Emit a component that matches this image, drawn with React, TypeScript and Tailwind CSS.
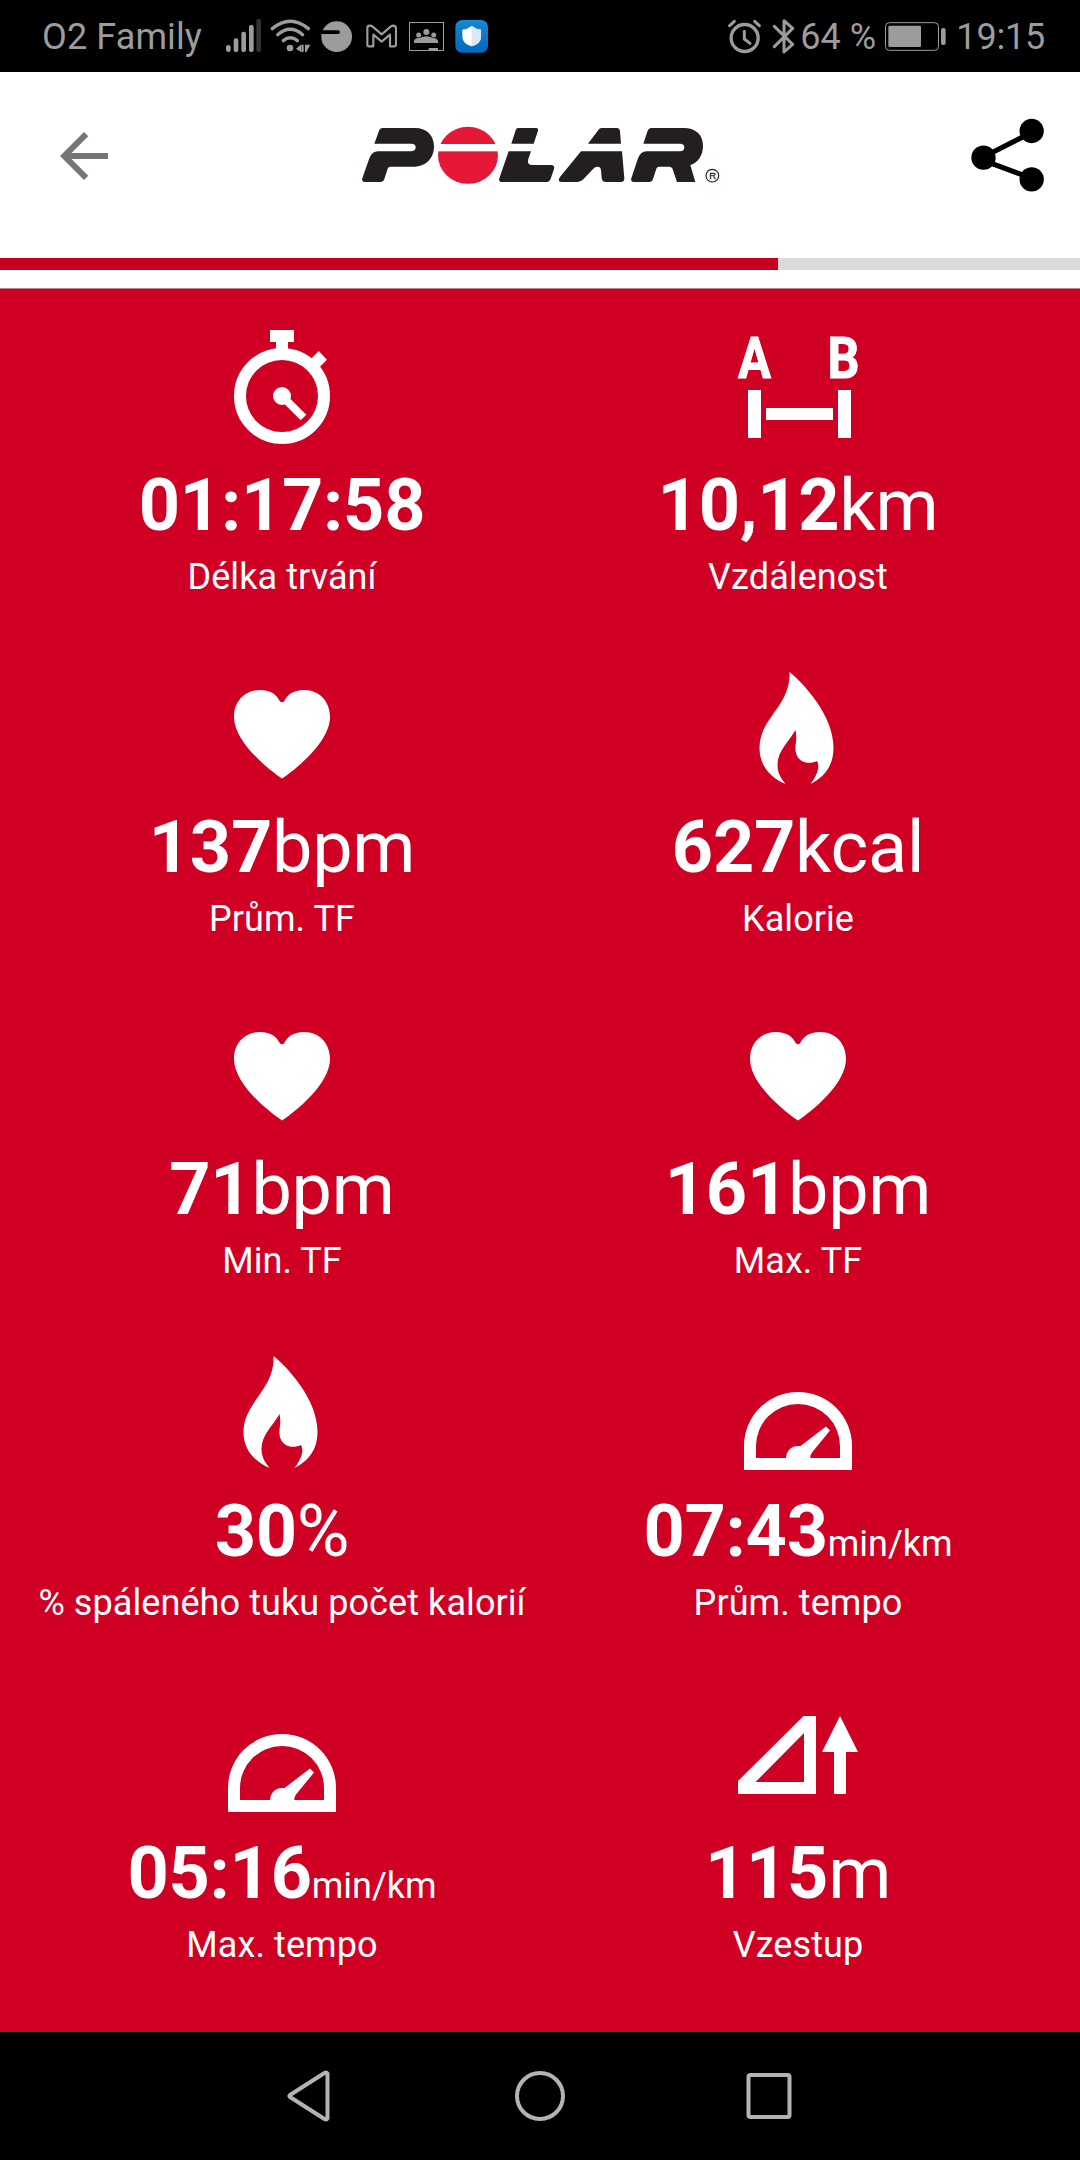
import type { ReactNode } from "react";

function StatusIcon({ x, w, className, children }: { x: number; w: number; className: string; children: ReactNode }) {
  return (
    <svg viewBox={`${x} 54 ${w} 108`} width={w / 3} height={36} className={`shrink-0 ${className}`} fill="#9c9c9c">
      {children}
    </svg>
  );
}

function StatusBar() {
  return (
    <div className="flex h-[72px] items-center bg-black pl-[42px] pr-[35px] text-[36px] leading-[42px] text-[#9c9c9c]">
      <span className="w-[184px] whitespace-nowrap pt-0.5 tracking-[0.12px]">O2 Family</span>
      <StatusIcon x={678} w={108} className="">
        <rect x="678" y="135" width="14" height="21" rx="7" />
        <rect x="701" y="115" width="14" height="41" rx="6" />
        <rect x="724" y="95" width="14" height="61" rx="6" />
        <rect x="747" y="75" width="14" height="81" rx="6" />
        <rect x="769" y="57" width="14" height="99" rx="6" fill="#333" />
      </StatusIcon>
      <StatusIcon x={810} w={123} className="ml-2">
        <g fill="none" stroke="#9c9c9c" strokeWidth="10" strokeLinecap="round">
          <path d="M817 86Q871 42 925 86" />
          <path d="M833 104Q871 72 908 104" />
          <path d="M850 122Q871 105 892 122" />
        </g>
        <circle cx="870" cy="144" r="10" />
        <path d="M904 133V157L888 146ZM905 134H911V156H905ZM915 134H931L919 156H915Z" />
      </StatusIcon>
      <StatusIcon x={960} w={99} className="ml-[9px]">
        <circle cx="1010" cy="110" r="46" />
        <path d="M960 91H1014Q1020 91 1020 96Q1020 102 1014 102H960Z" fill="#000" />
      </StatusIcon>
      <StatusIcon x={1098} w={93} className="ml-[13px]">
        <path
          d="M1102 84Q1102 77 1110 77Q1115 77 1118 80L1145 103L1172 80Q1176 77 1180 77Q1188 78 1188 84V134Q1188 139 1183 139H1170V104L1145 125L1120 104V139H1107Q1102 139 1102 134Z"
          fill="none"
          stroke="#9c9c9c"
          strokeWidth="6.5"
          strokeLinejoin="round"
        />
      </StatusIcon>
      <StatusIcon x={1227} w={105} className="ml-3">
        <rect x="1228.5" y="67.5" width="102" height="84" fill="none" stroke="#9c9c9c" strokeWidth="3" />
        <circle cx="1279" cy="96" r="9" />
        <circle cx="1256" cy="105" r="7.5" />
        <circle cx="1301" cy="105" r="7.5" />
        <path d="M1242 129V122Q1246 112 1259 114Q1279 104 1298 114Q1310 112 1314 122V129Z" />
        <rect x="1286" y="144" width="28" height="8" />
      </StatusIcon>
      <StatusIcon x={1365} w={99} className="ml-[11px]">
        <defs>
          <linearGradient id="shieldBg" x1="0" y1="0" x2="0" y2="1">
            <stop offset="0" stopColor="#1488d4" />
            <stop offset="1" stopColor="#0568bd" />
          </linearGradient>
        </defs>
        <rect x="1366" y="60" width="98" height="98" rx="20" fill="url(#shieldBg)" />
        <path d="M1415 78Q1428 88 1443 89V110Q1443 130 1415 139Q1387 130 1387 110V89Q1402 88 1415 78Z" fill="#fff" />
        <path d="M1415 78Q1428 88 1443 89V110Q1443 130 1415 139Z" fill="#d7e9f7" />
      </StatusIcon>
      <div className="ml-auto flex items-center">
        <StatusIcon x={81} w={99} className="">
          <g fill="none" stroke="#9c9c9c" strokeLinecap="round">
            <circle cx="131" cy="114" r="40.5" strokeWidth="10" />
            <path d="M130 94V117L147 130" strokeWidth="9" strokeLinejoin="round" />
            <path d="M86 77L100 64M161 64L175 77" strokeWidth="9" />
          </g>
        </StatusIcon>
        <StatusIcon x={213} w={69} className="ml-[11px]">
          <path
            d="M220 79L275 133L249 156V62L275 85L220 140"
            fill="none"
            stroke="#9c9c9c"
            strokeWidth="9"
            strokeLinejoin="round"
            strokeLinecap="round"
          />
        </StatusIcon>
        <span className="ml-[5px] w-[85px] whitespace-nowrap pt-0.5">64 %</span>
        <StatusIcon x={552} w={183} className="">
          <rect x="553.5" y="68" width="159" height="83" rx="12" fill="none" stroke="#9c9c9c" strokeWidth="3" />
          <rect x="562" y="77" width="98" height="64" rx="4" />
          <rect x="720" y="84" width="14" height="51" rx="6" />
        </StatusIcon>
        <span className="ml-[10px] pt-0.5 tracking-[-0.2px]">19:15</span>
      </div>
    </div>
  );
}

function PolarLogo() {
  return (
    <svg viewBox="30 45 1080 180" width="360" height="60" fill="#231f20" role="img" aria-label="Polar">
      <path d="M97 54H195C232 54 252 78 252 110C252 142 230 170 190 170H122Q115 170 113 176L103 207Q100 216 91 216H45Q34 216 37 205L58 145Q66 124 84 124H182Q197 124 197 112Q197 101 184 101H73L87 62Q90 54 97 54Z" />
      <ellipse cx="354" cy="136" rx="90" ry="85.5" fill="#e51937" />
      <rect x="260" y="102" width="190" height="22" fill="#fff" />
      <path d="M504 54H558Q566 54 564 62L551 101H484L497 61Q499 54 504 54Z" />
      <path d="M476 124H543L534 150Q532 165 546 165H606Q615 167 612 177L602 206Q598 216 588 216H457Q445 216 448 205Z" />
      <path d="M754 54H800Q809 54 810 64L813 101H714L745 60Q749 54 754 54Z" />
      <path d="M693 124H816L823 205Q824 216 812 216H768Q756 216 755 205L753 180Q752 170 742 170Q735 170 730 176L700 208Q693 216 682 216H634Q621 214 630 201Z" />
      <path d="M903 54H1000C1040 54 1059 76 1059 108C1059 135 1045 158 1021 165L1036 216H981L968 178Q966 170 957 170H928Q921 170 919 176L909 207Q906 216 897 216H852Q841 216 844 205L864 145Q872 124 890 124H990Q1003 124 1003 112Q1003 101 990 101H880L893 62Q896 54 903 54Z" />
      <circle cx="1087" cy="197" r="19" fill="none" stroke="#231f20" strokeWidth="3.5" />
      <text x="1087.5" y="207" fontSize="28" textAnchor="middle" fontFamily="Liberation Sans, sans-serif" stroke="#231f20" strokeWidth="0.8">R</text>
    </svg>
  );
}

function Header() {
  return (
    <header className="grid h-[186px] grid-cols-[360px_360px_360px] items-start bg-white pt-12">
      <svg viewBox="0 0 24 24" className="ml-12 size-[72px]" fill="#757575">
        <path d="M20 11H7.83l5.59-5.59L12 4l-8 8 8 8 1.41-1.41L7.83 13H20v-2z" />
      </svg>
      <div className="pt-[5px]">
        <PolarLogo />
      </div>
      <svg viewBox="90 54 222 222" className="-mt-[2px] mr-[36px] size-[74px] justify-self-end" fill="#000">
        <path d="M130 171L275 97M130 181L275 235" stroke="#000" strokeWidth="15.5" />
        <circle cx="275" cy="93" r="36.5" />
        <circle cx="130.500" cy="173" r="36.5" />
        <circle cx="275" cy="238" r="36.5" />
      </svg>
    </header>
  );
}

/* Metric icons share a 120x120 canvas centred above the value. */
const icons: Record<string, ReactNode> = {
  stopwatch: (
    <>
      <path d="M48 6H72V18H66V26H54V18H48Z" />
      <path d="M96.700 27L105 35.700L94 46.700L86 38Z" />
      <circle cx="60" cy="72" r="42" fill="none" stroke="#fff" strokeWidth="12" />
      <circle cx="60" cy="72" r="9" />
      <path d="M60 72L81.500 93.500" stroke="#fff" strokeWidth="8" />
    </>
  ),
  distance: (
    <>
      <path d="M10 66H23V114H10ZM28 84H95V96H28ZM100 66H113V114H100Z" />
      <g fontFamily="Roboto, sans-serif" fontWeight="700" fontSize="58" stroke="#fff" strokeWidth="1">
        <text x="0" y="53.500" textLength="33" lengthAdjust="spacingAndGlyphs">A</text>
        <text x="89.500" y="53.500" textLength="32" lengthAdjust="spacingAndGlyphs">B</text>
      </g>
    </>
  ),
  heart: (
    <path d="M60 112.500C47 104 12 76 12 51C12 35 23 24 38 24C49 24 55 29 58 35.500Q60 37 62 35.500C65 29 71 24 82 24C97 24 108 35 108 51C108 76 73 104 60 112.500Z" />
  ),
  flame: (
    <path d="M51.500 6C65 17 95.500 49 95.500 81.500C95.500 104 82 113 72.500 118C77 112 83 102 79 95C71 99 58.500 97 57.500 84C57 78 59.500 74 57.500 64C50 77 39.500 85 39.500 99C39.500 107 43.500 113 47.500 118C33 112 21.500 100 21.500 82C21.500 52 53 40 51.500 6Z" />
  ),
  gauge: (
    <>
      <path d="M6 120V96A54 54 0 0 1 114 96V120ZM18 108H102V96A42 42 0 0 0 18 96Z" fillRule="evenodd" />
      <path d="M48 109C48 100 54 96 60 96H62.500L88 76.500L92 80.500L74 102.500Q72 105 72 109Z" />
    </>
  ),
  ascent: (
    <>
      <path d="M0 102V89L65.500 24H78V102ZM17.500 90H66V41Z" fillRule="evenodd" />
      <path d="M102 24L120 60H108V102H96V60H84Z" />
    </>
  ),
};

type Metric = { icon: string; value: string; unit?: string; small?: boolean; label: string };

const metrics: Metric[] = [
  { icon: "stopwatch", value: "01:17:58", label: "Délka trvání" },
  { icon: "distance", value: "10,12", unit: "km", label: "Vzdálenost" },
  { icon: "heart", value: "137", unit: "bpm", label: "Prům. TF" },
  { icon: "flame", value: "627", unit: "kcal", label: "Kalorie" },
  { icon: "heart", value: "71", unit: "bpm", label: "Min. TF" },
  { icon: "heart", value: "161", unit: "bpm", label: "Max. TF" },
  { icon: "flame", value: "30", unit: "%", label: "% spáleného tuku počet kalorií" },
  { icon: "gauge", value: "07:43", unit: "min/km", small: true, label: "Prům. tempo" },
  { icon: "gauge", value: "05:16", unit: "min/km", small: true, label: "Max. tempo" },
  { icon: "ascent", value: "115", unit: "m", label: "Vzestup" },
];

function MetricCell({ icon, value, unit, small, label }: Metric) {
  return (
    <div className="flex h-[342px] flex-col items-center pt-9">
      <svg viewBox="0 0 120 120" className="size-[120px] shrink-0 overflow-visible" fill="#fff">
        {icons[icon]}
      </svg>
      <div className="mt-5 whitespace-nowrap text-[72px] leading-[84px] tracking-[-0.25px]">
        <span className="font-bold">{value}</span>
        {unit && <span className={small ? "text-[36px] leading-none tracking-normal" : ""}>{unit}</span>}
      </div>
      <div className="mt-2 whitespace-nowrap text-[36px] leading-[42px] tracking-[0.08px]">{label}</div>
    </div>
  );
}

function NavBar() {
  return (
    <nav className="grid h-32 grid-cols-[229px_229px_229px] items-center justify-center bg-black">
      <svg viewBox="0 0 56 56" className="size-14 justify-self-center" fill="none" stroke="#b3b3b3" strokeWidth="4">
        <path d="M44.500 5.500V50.500Q43.500 52 41.500 51L7 29Q6 28 7 27L41.500 5Q43.500 4 44.500 5.500Z" strokeLinejoin="round" />
      </svg>
      <svg viewBox="0 0 56 56" className="size-14 justify-self-center" fill="none" stroke="#b3b3b3" strokeWidth="4">
        <circle cx="28" cy="28" r="23" />
      </svg>
      <svg viewBox="0 0 56 56" className="size-14 justify-self-center" fill="none" stroke="#b3b3b3" strokeWidth="4">
        <rect x="7.500" y="7" width="41" height="42" rx="2" />
      </svg>
    </nav>
  );
}

export default function App() {
  return (
    <div className="flex h-[2160px] w-[1080px] flex-col overflow-hidden bg-white font-[Roboto,sans-serif]">
      <StatusBar />
      <Header />
      <div className="h-3 bg-[#dadada]">
        <div className="h-full w-[778px] bg-[#c8001e]" />
      </div>
      <main className="mt-[18px] grid flex-1 grid-cols-2 content-start bg-[#d00024] px-6 text-white shadow-[inset_0_1px_0_#c8808f]">
        {metrics.map((m) => (
          <MetricCell key={m.label} {...m} />
        ))}
      </main>
      <NavBar />
    </div>
  );
}
